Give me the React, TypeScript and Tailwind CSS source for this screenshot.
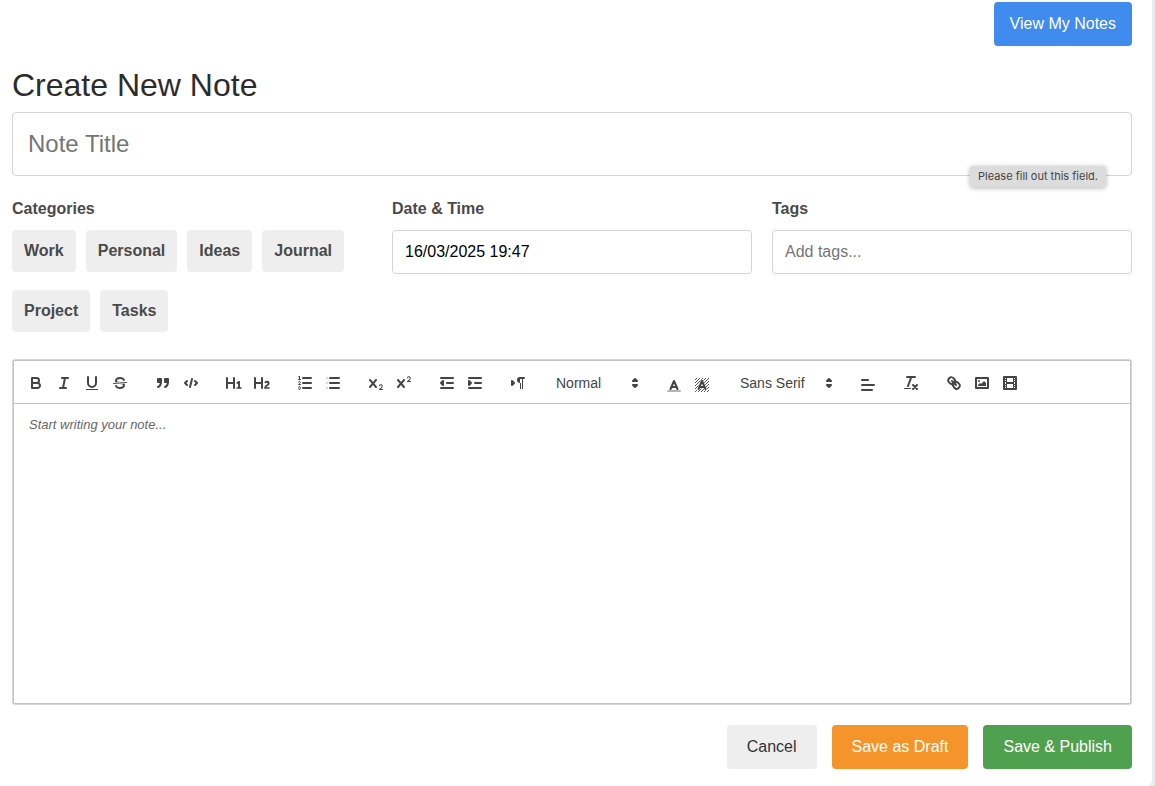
import { useState, type ReactNode } from 'react';

const CATEGORIES = ['Work', 'Personal', 'Ideas', 'Journal', 'Project', 'Tasks'];

const X_MARK =
  'M9.65,5.241a1,1,0,0,0-1.409.108L6,7.964,3.759,5.349A1,1,0,0,0,2.192,6.59178Q2.21541,6.6213,2.241,6.649L4.684,9.5,2.241,12.35A1,1,0,0,0,3.71,13.70722q0.02557-.02768.049-0.05722L6,11.036,8.241,13.65a1,1,0,1,0,1.567-1.24277Q9.78459,12.3777,9.759,12.35L7.316,9.5,9.759,6.651A1,1,0,0,0,9.65,5.241Z';

const fill = { fill: '#444', stroke: 'none' };

const ICONS: Record<string, ReactNode> = {
  Bold: (
    <>
      <path d="M5,4H9.5A2.5,2.5,0,0,1,12,6.5v0A2.5,2.5,0,0,1,9.5,9H5V4Z" />
      <path d="M5,9h5.5A2.5,2.5,0,0,1,13,11.5v0A2.5,2.5,0,0,1,10.5,14H5V9Z" />
    </>
  ),
  Italic: <path d="M7,4H13M5,14H11M8,14L10,4" />,
  Underline: (
    <>
      <path d="M5,3V9a4.012,4.012,0,0,0,4,4H9a4.012,4.012,0,0,0,4-4V3" />
      <rect {...fill} height="1" rx="0.5" width="12" x="3" y="15" />
    </>
  ),
  Strike: (
    <>
      <path strokeWidth="1" d="M15.5,8.5L2.5,9.5" />
      <path {...fill} d="M9.007,8C6.542,7.791,6,7.519,6,6.5,6,5.792,7.283,5,9,5c1.571,0,2.765.679,2.969,1.309a1,1,0,0,0,1.9-.617C13.356,4.106,11.354,3,9,3,6.2,3,4,4.538,4,6.5a3.2,3.2,0,0,0,.5,1.843Z" />
      <path {...fill} d="M8.984,10C11.457,10.208,12,10.479,12,11.5c0,0.708-1.283,1.5-3,1.5-1.571,0-2.765-.679-2.969-1.309a1,1,0,1,0-1.9.617C4.644,13.894,6.646,15,9,15c2.8,0,5-1.538,5-3.5a3.2,3.2,0,0,0-.5-1.843Z" />
    </>
  ),
  Blockquote: (
    <g fill="#444">
      <rect height="3" width="3" x="4" y="5" />
      <rect height="3" width="3" x="11" y="5" />
      <path d="M7,8c0,4.031-3,5-3,5" />
      <path d="M14,8c0,4.031-3,5-3,5" />
    </g>
  ),
  Code: <path d="M5,7L3,9L5,11M13,7L15,9L13,11M10,5L8,13" />,
  'Heading 1': (
    <path {...fill} d="M10,4V14a1,1,0,0,1-2,0V10H3v4a1,1,0,0,1-2,0V4A1,1,0,0,1,3,4V8H8V4a1,1,0,0,1,2,0Zm6.06787,9.209H14.98975V7.59863a.54085.54085,0,0,0-.605-.60547h-.62744a1.01119,1.01119,0,0,0-.748.29688L11.645,8.56641a.5435.5435,0,0,0-.022.8584l.28613.30762a.53861.53861,0,0,0,.84717.0332l.09912-.08789a1.2137,1.2137,0,0,0,.2417-.35254h.02246s-.01123.30859-.01123.60547V13.209H12.041a.54085.54085,0,0,0-.605.60547v.43945a.54085.54085,0,0,0,.605.60547h4.02686a.54085.54085,0,0,0,.605-.60547v-.43945A.54085.54085,0,0,0,16.06787,13.209Z" />
  ),
  'Heading 2': (
    <path {...fill} d="M16.73975,13.81445v.43945a.54085.54085,0,0,1-.605.60547H11.855a.58392.58392,0,0,1-.64893-.60547V14.0127c0-2.90527,3.39941-3.42187,3.39941-4.55469a.77675.77675,0,0,0-.84717-.78125,1.17684,1.17684,0,0,0-.83594.38477c-.2749.26367-.561.374-.85791.13184l-.4292-.34082c-.30811-.24219-.38525-.51758-.1543-.81445a2.97155,2.97155,0,0,1,2.45361-1.17676,2.45393,2.45393,0,0,1,2.68408,2.40918c0,2.45312-3.1792,2.92676-3.27832,3.93848h2.79443A.54085.54085,0,0,1,16.73975,13.81445ZM9,3A.99974.99974,0,0,0,8,4V8H3V4A1,1,0,0,0,1,4V14a1,1,0,0,0,2,0V10H8v4a1,1,0,0,0,2,0V4A.99974.99974,0,0,0,9,3Z" />
  ),
  'Ordered list': (
    <>
      <path d="M7,4H15M7,9H15M7,14H15" />
      <path strokeWidth="1" d="M2.5,5.5H4.5" />
      <path {...fill} d="M3.5,6A0.5,0.5,0,0,1,3,5.5V3.085l-0.276.138A0.5,0.5,0,0,1,2.053,3c-0.124-.247-0.023-0.324.224-0.447l1-.5A0.5,0.5,0,0,1,4,2.5v3A0.5,0.5,0,0,1,3.5,6Z" />
      <path strokeWidth="1" d="M4.5,10.5h-2c0-.234,1.85-1.076,1.85-2.234A0.959,0.959,0,0,0,2.5,8.156" />
      <path strokeWidth="1" d="M2.5,14.846a0.959,0.959,0,0,0,1.85-.109A0.7,0.7,0,0,0,3.75,14a0.688,0.688,0,0,0,.6-0.736,0.959,0.959,0,0,0-1.85-.109" />
    </>
  ),
  'Bullet list': (
    <>
      <path d="M6,4H15M6,9H15M6,14H15" />
      <path strokeWidth="1" d="M3,4H3M3,9H3M3,14H3" />
    </>
  ),
  Subscript: (
    <g {...fill}>
      <path d="M15.5,15H13.861a3.858,3.858,0,0,0,1.914-2.975,1.8,1.8,0,0,0-1.6-1.751A1.921,1.921,0,0,0,12.021,11.7a0.50013,0.50013,0,1,0,.957.291h0a0.914,0.914,0,0,1,1.053-.725,0.81,0.81,0,0,1,.744.762c0,1.076-1.16971,1.86982-1.93971,2.43082A1.45639,1.45639,0,0,0,12,15.5a0.5,0.5,0,0,0,.5.5h3A0.5,0.5,0,0,0,15.5,15Z" />
      <path d={X_MARK} />
    </g>
  ),
  Superscript: (
    <g {...fill}>
      <path d="M15.5,7H13.861a4.015,4.015,0,0,0,1.914-2.975,1.8,1.8,0,0,0-1.6-1.751A1.922,1.922,0,0,0,12.021,3.7a0.5,0.5,0,1,0,.957.291,0.917,0.917,0,0,1,1.053-.725,0.81,0.81,0,0,1,.744.762c0,1.077-1.164,1.925-1.934,2.486A1.423,1.423,0,0,0,12,7.5a0.5,0.5,0,0,0,.5.5h3A0.5,0.5,0,0,0,15.5,7Z" />
      <path d={X_MARK} />
    </g>
  ),
  Outdent: (
    <>
      <path d="M3,14H15M3,4H15M9,9H15" />
      <path fill="#444" d="M5,7V11L3,9Z" />
    </>
  ),
  Indent: (
    <>
      <path d="M3,14H15M3,4H15M9,9H15" />
      <path fill="#444" d="M3,7V11L5,9Z" />
    </>
  ),
  'Text direction': (
    <>
      <path fill="#444" d="M3,11L5,9L3,7Z" />
      <path d="M15,4H11" />
      <path {...fill} d="M11,3a3,3,0,0,0,0,6h1V3H11ZM11,4h1v11h-1ZM13,4h1v11h-1Z" />
    </>
  ),
  'Text color': (
    <>
      <path strokeOpacity="0.4" d="M3,15H15" />
      <path d="M5.5,13L9,5L12.5,13M11.63,11H6.38" />
    </>
  ),
  'Background color': (
    <>
      <path strokeWidth="0.9" strokeLinecap="butt" d="M2,4L4,2M2,7L7,2M2,10L10,2M2,13L13,2M2,16L16,2M5,16L16,5M8,16L16,8M11,16L16,11M14,16L16,14" />
      <path stroke="#fff" strokeWidth="3" d="M5.5,13L9,5L12.5,13M11.63,11H6.38" />
      <path d="M5.5,13L9,5L12.5,13M11.63,11H6.38" />
    </>
  ),
  Align: <path d="M3,9H15M3,14H13M3,4H9" />,
  'Clear formatting': (
    <>
      <path d="M5,3H13M6,12L9.35,3M11,11L15,15M15,11L11,15" />
      <rect {...fill} height="1" rx="0.5" width="7" x="2" y="14" />
    </>
  ),
  Link: (
    <>
      <path d="M7,7L11,11" />
      <path d="M8.9,4.577a3.476,3.476,0,0,1,.36,4.679A3.476,3.476,0,0,1,4.577,8.9C3.185,7.5,2.035,6.4,4.217,4.217S7.5,3.185,8.9,4.577Z" />
      <path d="M13.423,9.1a3.476,3.476,0,0,0-4.679-.36,3.476,3.476,0,0,0,.36,4.679c1.392,1.392,2.5,2.542,4.679.36S14.815,10.5,13.423,9.1Z" />
    </>
  ),
  Image: (
    <>
      <rect height="10" width="12" x="3" y="4" />
      <circle {...fill} cx="6" cy="7" r="1" />
      <path {...fill} d="M5,12V11L7,9L8,10L11,7L13,9V12Z" />
    </>
  ),
  Video: (
    <>
      <rect height="12" width="12" x="3" y="3" />
      <path {...fill} d="M5,3h1v12h-1ZM12,3h1v12h-1ZM5,8h8v2h-8ZM3,5h3v1h-3ZM3,7h3v1h-3ZM3,10h3v1h-3ZM3,12h3v1h-3ZM12,5h3v1h-3ZM12,7h3v1h-3ZM12,10h3v1h-3ZM12,12h3v1h-3Z" />
    </>
  ),
};

function Icon({ children }: { children: ReactNode }) {
  return (
    <svg
      viewBox="0 0 18 18"
      className="size-[18px] shrink-0"
      fill="none"
      stroke="#444"
      strokeWidth="2"
      strokeLinecap="round"
      strokeLinejoin="round"
      aria-hidden="true"
    >
      {children}
    </svg>
  );
}

function ToolGroup({ names }: { names: string[] }) {
  return (
    <div className="flex">
      {names.map((name) => (
        <button key={name} type="button" aria-label={name} className="flex h-6 w-7 items-center justify-center">
          <Icon>{ICONS[name]}</Icon>
        </button>
      ))}
    </div>
  );
}

// colour and alignment pickers sit a little lower than the plain buttons
function PickerGroup({ names }: { names: string[] }) {
  return (
    <div className="flex pt-1">
      {names.map((name) => (
        <button key={name} type="button" aria-label={name} className="flex h-5 w-7 items-center justify-center">
          <Icon>{ICONS[name]}</Icon>
        </button>
      ))}
    </div>
  );
}

function ToolSelect({ label, options, width }: { label: string; options: string[]; width: string }) {
  return (
    <div className={`relative flex h-6 items-center ${width}`}>
      <select aria-label={label} className="h-6 w-full appearance-none bg-transparent pl-[9px] text-sm font-medium text-[#444] outline-none">
        {options.map((option) => (
          <option key={option}>{option}</option>
        ))}
      </select>
      <span className="pointer-events-none absolute right-px">
        <Icon>
          <path d="M7,11L9,13L11,11ZM7,7L9,5L11,7Z" />
        </Icon>
      </span>
    </div>
  );
}

function Toolbar() {
  return (
    <div className="flex flex-wrap gap-x-[15px] border-b border-[#c4c4c4] px-2 pt-2.5 pb-2">
      <ToolGroup names={['Bold', 'Italic', 'Underline', 'Strike']} />
      <ToolGroup names={['Blockquote', 'Code']} />
      <ToolGroup names={['Heading 1', 'Heading 2']} />
      <ToolGroup names={['Ordered list', 'Bullet list']} />
      <ToolGroup names={['Subscript', 'Superscript']} />
      <ToolGroup names={['Outdent', 'Indent']} />
      <ToolGroup names={['Text direction']} />
      <ToolSelect label="Text size" options={['Normal', 'Small', 'Large', 'Huge']} width="w-[98px]" />
      <PickerGroup names={['Text color', 'Background color']} />
      <ToolSelect label="Font" options={['Sans Serif', 'Serif', 'Monospace']} width="w-[108px]" />
      <PickerGroup names={['Align']} />
      <ToolGroup names={['Clear formatting']} />
      <ToolGroup names={['Link', 'Image', 'Video']} />
    </div>
  );
}

export default function App() {
  const [title, setTitle] = useState('');
  const [dateTime, setDateTime] = useState('16/03/2025 19:47');
  const [tags, setTags] = useState('');
  const [content, setContent] = useState('');

  return (
    <div className="min-h-screen bg-[#ebebeb] pr-[3px] font-['Liberation_Sans',Arial,sans-serif] text-base">
      <main className="min-h-screen rounded-br-md bg-white pt-0.5 pr-5 pb-[17px] pl-3">
        <div className="flex justify-end">
          <a href="#notes" className="flex h-11 items-center rounded bg-[#3f8bee] px-4 text-white">
            View My Notes
          </a>
        </div>

        <form onSubmit={(e) => e.preventDefault()}>
          <h1 className="mt-[19px] mb-[7px] text-[32px] leading-10 text-[#2c2c2c]">Create New Note</h1>

          <div className="relative">
            <input
              type="text"
              required
              aria-label="Note Title"
              placeholder="Note Title"
              value={title}
              onChange={(e) => setTitle(e.target.value)}
              className="block h-16 w-full rounded border border-[#d6d6d6] px-[15px] text-2xl outline-none placeholder:text-[#757575]"
            />
            <div
              role="tooltip"
              className="absolute right-[26px] -bottom-[11px] rounded-[3px] bg-[#dcdcdc] px-2 py-[3px] font-[Inter,sans-serif] text-[11px] leading-[15px] text-[#444] shadow-[0_1px_5px_rgba(0,0,0,0.3)]"
            >
              Please fill out this field.
            </div>
          </div>

          <div className="mt-[21px] grid grid-cols-3 gap-5">
            <fieldset>
              <legend className="mb-[9px] font-bold text-[#4a4a4a]">Categories</legend>
              <div className="flex flex-wrap gap-x-2.5 gap-y-[18px]">
                {CATEGORIES.map((category) => (
                  <button
                    key={category}
                    type="button"
                    className="flex h-[42px] items-center rounded bg-[#eee] px-3 font-bold text-[#4a4a4a]"
                  >
                    {category}
                  </button>
                ))}
              </div>
            </fieldset>
            <div>
              <label htmlFor="datetime" className="mb-[9px] block font-bold text-[#4a4a4a]">
                Date &amp; Time
              </label>
              <input
                id="datetime"
                type="text"
                value={dateTime}
                onChange={(e) => setDateTime(e.target.value)}
                className="block h-11 w-full rounded border border-[#d6d6d6] px-3 text-black outline-none"
              />
            </div>
            <div>
              <label htmlFor="tags" className="mb-[9px] block font-bold text-[#4a4a4a]">
                Tags
              </label>
              <input
                id="tags"
                type="text"
                placeholder="Add tags..."
                value={tags}
                onChange={(e) => setTags(e.target.value)}
                className="block h-11 w-full rounded border border-[#d6d6d6] px-3 outline-none placeholder:text-[#757575]"
              />
            </div>
          </div>

          <div className="mt-[27px] rounded-[3px] border border-[#d6d6d6]">
            <div className="border border-[#c4c4c4]">
              <Toolbar />
              <textarea
                aria-label="Note content"
                placeholder="Start writing your note..."
                value={content}
                onChange={(e) => setContent(e.target.value)}
                className="block h-[299px] w-full resize-none px-[15px] py-3 text-[13px] leading-[18px] outline-none placeholder:text-[#666] placeholder:italic"
              />
            </div>
          </div>

          <div className="mt-5 flex justify-end gap-[15px]">
            <button type="button" className="h-11 rounded bg-[#eee] px-5 text-[#333]">
              Cancel
            </button>
            <button type="button" className="h-11 rounded bg-[#f5942a] px-5 text-white">
              Save as Draft
            </button>
            <button type="submit" className="h-11 rounded bg-[#50a14f] px-5 text-white">
              Save &amp; Publish
            </button>
          </div>
        </form>
      </main>
    </div>
  );
}
